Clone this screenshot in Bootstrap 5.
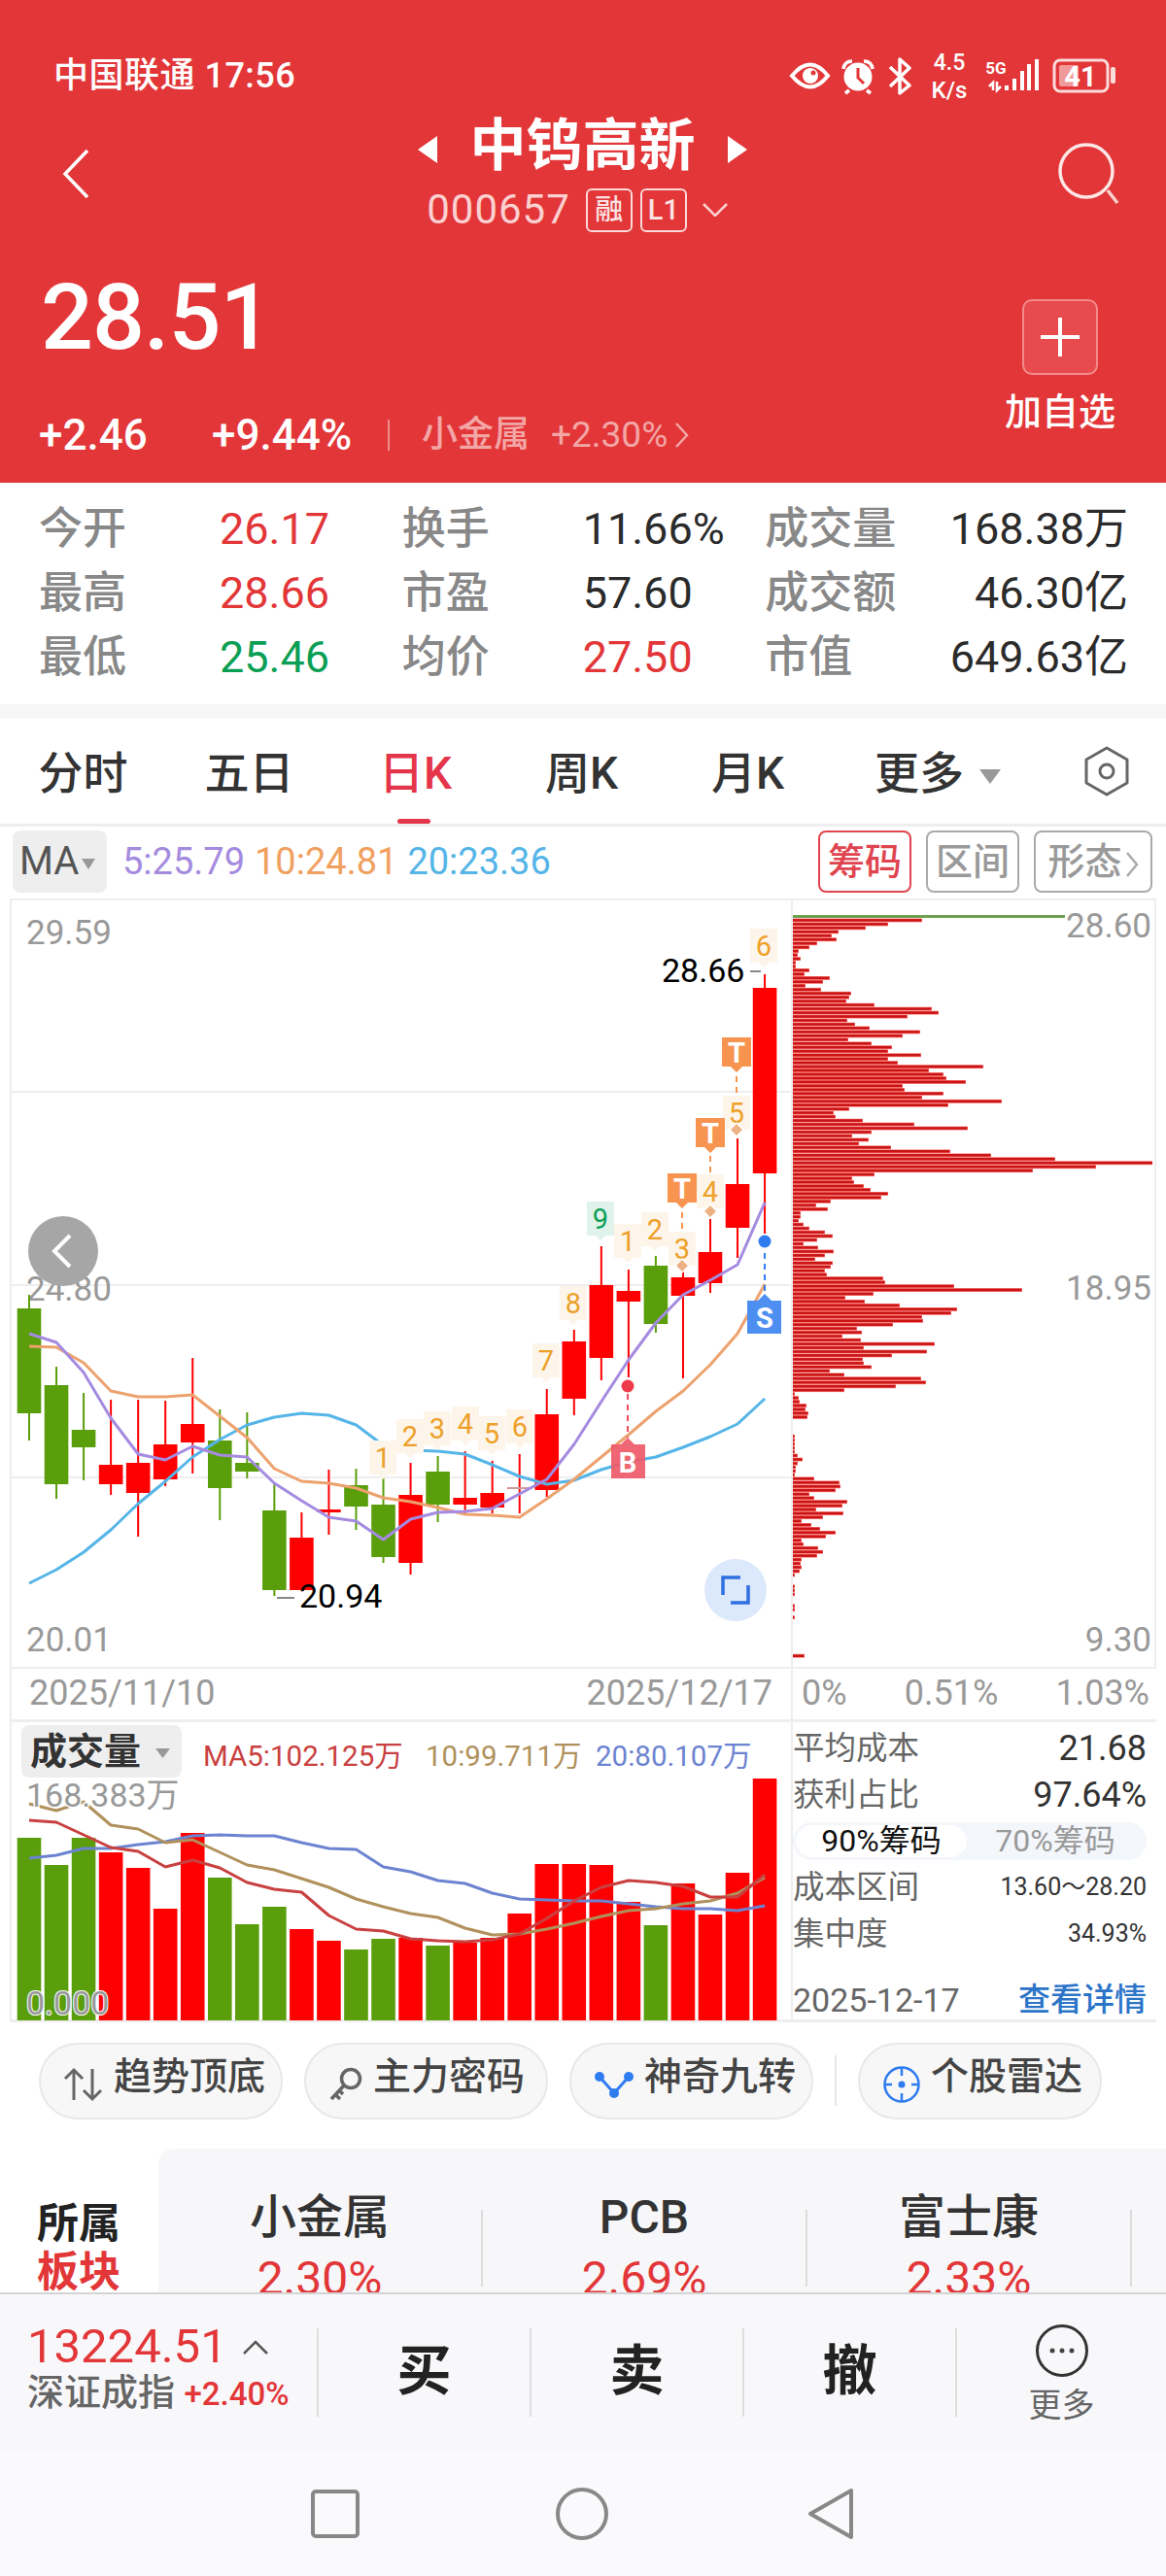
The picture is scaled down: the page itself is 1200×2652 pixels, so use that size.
<!DOCTYPE html>
<html lang="zh-CN">

<head>
    <meta charset="UTF-8">
    <meta name="viewport" content="width=device-width, initial-scale=1.0">
    <title>中钨高新</title>
    <link rel="stylesheet" href="https://cdn.jsdelivr.net/npm/bootstrap@5.3.2/dist/css/bootstrap.min.css">
    <style>
        body {
            background-color: #fff;
            color: #333;
            font-family: Roboto, "Noto Sans CJK SC", sans-serif;
        }

        .app-page { width: 1200px; height: 2652px; overflow: hidden; }

        /* top red block */
        .quote-head { height: 497px; background-color: #e23638; color: #fff; padding: 49px 46px 0 40px; }
        .status-line { height: 58px; padding-left: 15px; margin-right: 5px; }
        .carrier { font-size: 36px; font-weight: 500; line-height: 58px; letter-spacing: 0.5px; }
        .title-line { height: 134px; margin-top: 5px; padding-left: 23px; }
        .title-block { width: 360px; margin-left: 16px; }
        .stock-name { font-size: 58px; font-weight: 700; line-height: 66px; gap: 33px; padding-left: 2px; }
        .stock-sub { color: #fbd0d0; font-size: 42px; line-height: 50px; height: 50px; margin: 8px 0 0 -9px; }
        .stock-code { letter-spacing: 1px; }
        .tag-box { border: 2px solid #fbd9d9; border-radius: 6px; width: 48px; height: 45px; font-size: 29px; line-height: 41px; text-align: center; font-weight: 500; color: #fbe2e2; }
        .price-line { margin-top: 26px; }
        .last-price { font-size: 95px; line-height: 110px; font-weight: 500; letter-spacing: -1px; margin-left: 2px; }
        .move-line { margin-top: 41px; height: 50px; line-height: 50px; font-size: 44px; font-weight: 500; }
        .move-one { width: 178px; }
        .move-two { width: 181px; }
        .move-rule { width: 2px; height: 32px; background-color: #ef8d8d; margin-right: 33px; }
        .sector-link { color: #f3a6a6; font-size: 37px; width: 133px; font-weight: 500; }
        .sector-pct { color: #f3a6a6; font-size: 37px; font-weight: 400; }
        .add-wrap { margin-top: 36px; margin-right: 6px; }
        .add-box { width: 78px; height: 78px; background-color: #e84b4e; border: 2px solid #f28b8c; border-radius: 10px; padding: 0; }
        .add-label { font-size: 38px; font-weight: 500; line-height: 46px; margin-top: 15px; }

        /* numbers table */
        .stat-table { height: 228px; padding: 15px 39px 0 40px; }
        .stat-line { height: 66px; font-size: 45px; line-height: 66px; }
        .stat-name { color: #888; width: 186px; font-weight: 500; }
        .stat-val { color: #2b2b2b; font-size: 45px; }
        .up-red { color: #e23638; }
        .down-green { color: #0b9f55; }
        .gap-strip { height: 15px; background-color: #f7f7f7; }

        /* period tabs */
        .period-tabs { height: 111px; border-bottom: 3px solid #eee; position: relative; }
        .period-tabs .nav-link { width: 171px; height: 108px; padding: 0; text-align: center; color: #333; font-size: 46px; line-height: 112px; font-weight: 500; }
        .period-tabs .nav-link.active { color: #e5354a; position: relative; }
        .period-tabs .nav-link.active::after { content: ""; position: absolute; left: 67px; bottom: 0; width: 34px; height: 5px; border-radius: 3px; background-color: #e5354a; }
        .period-more { text-align: left !important; padding-left: 45px !important; width: 200px !important; }
        .period-hex { margin-right: 38px; margin-top: 28px; }

        /* MA toolbar */
        .ma-bar { height: 74px; padding: 4px 14px 6px 13px; }
        .ma-chip { width: 97px; height: 64px; background-color: #eee; border-radius: 8px; font-size: 40px; color: #555; line-height: 64px; padding-left: 7px; }
        .tri-down { display: inline-block; width: 0; height: 0; border-left: 7px solid transparent; border-right: 7px solid transparent; border-top: 11px solid #999; vertical-align: middle; margin-left: 3px; }
        .tri-big { border-left-width: 11px; border-right-width: 11px; border-top-width: 15px; margin-left: 16px; }
        .ma-vals { font-size: 38px; margin-left: 16px; gap: 10px; }
        .ma-five { color: #a58be0; }
        .ma-ten { color: #f0a060; }
        .ma-twenty { color: #55b5e8; }
        .tool-btn { height: 64px; width: 96px; padding: 0; border: 2px solid #aaa; border-radius: 8px; font-size: 38px; line-height: 58px; color: #999; font-weight: 500; background-color: #fff; margin-left: 15px; }
        .tool-btn.on { border-color: #e0444f; color: #e0444f; }
        .tool-wide { width: 122px; }

        /* chart panels */
        .chart-main { margin: 0 10px; width: 1180px; height: 793px; border: 2px solid #eee; }
        .chart-main svg, .vol-main svg { display: block; }
        .chart-left { width: 804px; border-right: 2px solid #eee; }
        .date-line { margin: 0 10px; width: 1180px; height: 52px; font-size: 36px; color: #999; border-left: 2px solid #eee; line-height: 50px; }
        .date-left { width: 804px; padding: 0 19px 0 18px; border-right: 2px solid #eee; }
        .date-right { width: 372px; padding: 0 5px 0 9px; }
        .vol-main { margin: 0 10px; width: 1180px; height: 312px; border-top: 3px solid #eee; border-bottom: 3px solid #eee; border-left: 2px solid #eee; }
        .vol-left { width: 804px; border-right: 2px solid #eee; }
        .cost-side { width: 364px; font-size: 32.5px; color: #666; padding-top: 3px; }
        .cost-line { height: 48px; line-height: 48px; }
        .cost-big { font-size: 36px; color: #333; }
        .cost-small { font-size: 25px; color: #333; }
        .cost-switch { height: 39px; background-color: #f3f6fa; border-radius: 20px; padding: 3px; margin: 4px 0 4px; font-size: 32px; line-height: 33px; color: #999; }
        .cost-on { width: 176px; background-color: #fff; border-radius: 17px; color: #111; text-align: center; }
        .cost-off { flex: 1; text-align: center; }
        .cost-foot { font-size: 34px; margin-top: 22px; line-height: 44px; }
        .cost-more { font-size: 33px; color: #2b74c8; font-weight: 500; }

        /* feature pills */
        .pill-row { height: 130px; padding: 21px 0 0 40px; gap: 22px; }
        .pill-btn { width: 251px; height: 79px; padding: 0 0 9px 23px; background-color: #f7f7f7; border: 2px solid #e8e8e8; font-size: 39px; font-weight: 500; color: #444; gap: 10px; }
        .pill-rule { width: 2px; height: 52px; background-color: #e6e6e6; margin-top: 13px; }

        /* sector strip */
        .sector-row { height: 148px; overflow: hidden; }
        .sector-head { width: 163px; padding: 52px 0 0 38px; font-size: 43px; line-height: 50px; font-weight: 700; color: #222; }
        .sector-body { flex: 1; background-color: #f7f7f9; border-top-left-radius: 16px; }
        .sector-item { width: 334px; height: 79px; margin-top: 63px; text-align: center; font-size: 48px; line-height: 52px; font-weight: 500; color: #333; border-right: 2px solid #ddd; }
        .sector-item div { margin-top: -18px; }
        .sector-item .sector-pct-big { color: #e23638; font-size: 48px; font-weight: 400; line-height: 62px; margin-top: 6px; }

        /* trade bar */
        .trade-bar { height: 165px; background-color: #f8f8fb; border-top: 2px solid #d4d4d4; padding-top: 35px; }
        .index-cell { width: 328px; height: 91px; padding-left: 28px; border-right: 2px solid #ddd; }
        .index-val { color: #e23638; font-size: 49px; line-height: 46px; margin-top: -4px; }
        .index-name { color: #666; font-size: 38px; line-height: 44px; margin-top: 2px; font-weight: 500; }
        .index-pct { color: #e23638; font-size: 33px; }
        .trade-cell { width: 219px; height: 91px; border-right: 2px solid #ddd; font-size: 56px; font-weight: 700; color: #222; line-height: 88px; text-align: center; }
        .more-cell { width: 215px; text-align: center; color: #666; font-size: 34px; line-height: 40px; margin-top: -5px; }

        .nav-strip { height: 127px; background-color: #fafafc; }
    </style>
</head>

<body>
    <div class="app-page">

        <header class="quote-head">
            <div class="status-line d-flex justify-content-between align-items-center">
                <span class="carrier">中国联通 17:56</span>
                <svg width="340" height="66" viewBox="810 44 340 66">
                    <path d="M816 77 Q835 54 853 77 Q835 100 816 77Z" fill="none" stroke="#fff" stroke-width="4"/>
                    <circle cx="835" cy="77" r="8" fill="#fff"/>
                    <circle cx="838" cy="74" r="2.5" fill="#e23638"/>
                    <circle cx="884" cy="78" r="14.5" fill="#fff"/>
                    <path d="M884 69 V79 L890 85" fill="none" stroke="#e23638" stroke-width="3"/>
                    <path d="M869 70 Q870 62 878 62 M899 70 Q898 62 890 62 M875 92 L871 95 M893 92 L897 95" fill="none" stroke="#fff" stroke-width="3.5"/>
                    <path d="M917 68 L937 87 L927 95 V60 L937 69 L917 88" fill="none" stroke="#fff" stroke-width="3.5" stroke-linejoin="round"/>
                    <text x="978" y="71" text-anchor="middle" fill="#fff" font-size="23" font-weight="500">4.5</text>
                    <text x="978" y="100" text-anchor="middle" fill="#fff" font-size="24" font-weight="500">K/s</text>
                    <text x="1026" y="75" text-anchor="middle" fill="#fff" font-size="17" font-weight="700">5G</text>
                    <path d="M1019 88 L1023 84 V92 M1027 83 V92 L1031 88" fill="none" stroke="#fff" stroke-width="2.5"/>
                    <g fill="#fff">
                        <rect x="1035" y="87" width="4" height="5"/>
                        <rect x="1043" y="80" width="4" height="12"/>
                        <rect x="1051" y="72" width="4" height="20"/>
                        <rect x="1058" y="65" width="4" height="27"/>
                        <rect x="1066" y="60" width="4" height="32"/>
                    </g>
                    <rect x="1086" y="61" width="55" height="32" rx="6" fill="none" stroke="#fbdcdc" stroke-width="3"/>
                    <rect x="1091" y="66" width="20" height="22" rx="2" fill="#f09a9a"/>
                    <text x="1113" y="88" text-anchor="middle" fill="#fff" font-size="29" font-weight="700">41</text>
                    <rect x="1144" y="68" width="5" height="17" rx="2" fill="#fbdcdc"/>
                </svg>
            </div>

            <div class="title-line d-flex justify-content-between align-items-center">
                <svg width="30" height="52" viewBox="0 0 30 52"><path d="M27 2 L4 26 L27 50" fill="none" stroke="#fff" stroke-width="3.5"/></svg>
                <div class="title-block">
                    <div class="d-flex justify-content-center align-items-center stock-name">
                        <svg width="20" height="28" viewBox="0 0 20 28" class="mt-2"><path d="M20 0 V28 L0 14Z" fill="#fff"/></svg>
                        <span>中钨高新</span>
                        <svg width="20" height="28" viewBox="0 0 20 28" class="mt-2"><path d="M0 0 V28 L20 14Z" fill="#fff"/></svg>
                    </div>
                    <div class="d-flex justify-content-center align-items-center stock-sub">
                        <span class="stock-code">000657</span>
                        <span class="tag-box ms-3">融</span>
                        <span class="tag-box ms-2">L1</span>
                        <svg width="26" height="14" viewBox="0 0 26 14" class="ms-3"><path d="M1 1 L13 13 L25 1" fill="none" stroke="#fbd0d0" stroke-width="2.5"/></svg>
                    </div>
                </div>
                <svg width="66" height="66" viewBox="0 0 66 66">
                    <circle cx="30" cy="30" r="27" fill="none" stroke="#fde6e6" stroke-width="3.5"/>
                    <path d="M52 50 L62 63" stroke="#fbd0d0" stroke-width="3.5"/>
                </svg>
            </div>

            <div class="price-line d-flex justify-content-between">
                <div>
                    <div class="last-price">28.51</div>
                    <div class="move-line d-flex align-items-center">
                        <span class="move-one">+2.46</span>
                        <span class="move-two">+9.44%</span>
                        <span class="move-rule"></span>
                        <span class="sector-link">小金属</span>
                        <span class="sector-pct">+2.30%</span>
                        <svg width="14" height="26" viewBox="0 0 14 26" class="ms-2"><path d="M1 1 L12 13 L1 25" fill="none" stroke="#f3a6a6" stroke-width="2.5"/></svg>
                    </div>
                </div>
                <div class="add-wrap d-flex flex-column align-items-center">
                    <button type="button" class="btn add-box d-flex align-items-center justify-content-center">
                        <svg width="40" height="40" viewBox="0 0 40 40"><path d="M20 0 V40 M0 20 H40" stroke="#fff" stroke-width="4"/></svg>
                    </button>
                    <div class="add-label">加自选</div>
                </div>
            </div>
        </header>

        <section class="stat-table">
            <div class="row g-0 stat-line">
                <div class="col-4 d-flex"><span class="stat-name">今开</span><span class="stat-val up-red">26.17</span></div>
                <div class="col-4 d-flex"><span class="stat-name">换手</span><span class="stat-val">11.66%</span></div>
                <div class="col-4 d-flex justify-content-between"><span class="stat-name">成交量</span><span class="stat-val">168.38万</span></div>
            </div>
            <div class="row g-0 stat-line">
                <div class="col-4 d-flex"><span class="stat-name">最高</span><span class="stat-val up-red">28.66</span></div>
                <div class="col-4 d-flex"><span class="stat-name">市盈</span><span class="stat-val">57.60</span></div>
                <div class="col-4 d-flex justify-content-between"><span class="stat-name">成交额</span><span class="stat-val">46.30亿</span></div>
            </div>
            <div class="row g-0 stat-line">
                <div class="col-4 d-flex"><span class="stat-name">最低</span><span class="stat-val down-green">25.46</span></div>
                <div class="col-4 d-flex"><span class="stat-name">均价</span><span class="stat-val up-red">27.50</span></div>
                <div class="col-4 d-flex justify-content-between"><span class="stat-name">市值</span><span class="stat-val">649.63亿</span></div>
            </div>
        </section>
        <div class="gap-strip"></div>

        <nav class="nav period-tabs flex-nowrap align-items-start">
            <a class="nav-link" href="#">分时</a>
            <a class="nav-link" href="#">五日</a>
            <a class="nav-link active" href="#">日K</a>
            <a class="nav-link" href="#">周K</a>
            <a class="nav-link" href="#">月K</a>
            <a class="nav-link period-more" href="#">更多<span class="tri-down tri-big"></span></a>
            <svg width="46" height="52" viewBox="0 0 46 52" class="ms-auto period-hex">
                <path d="M23 2 L44 14 V38 L23 50 L2 38 V14Z" fill="none" stroke="#666" stroke-width="3" stroke-linejoin="round"/>
                <circle cx="23" cy="26" r="7" fill="none" stroke="#666" stroke-width="3"/>
            </svg>
        </nav>

        <div class="ma-bar d-flex align-items-center">
            <div class="ma-chip">MA<span class="tri-down"></span></div>
            <div class="ma-vals d-flex">
                <span class="ma-five">5:25.79</span>
                <span class="ma-ten">10:24.81</span>
                <span class="ma-twenty">20:23.36</span>
            </div>
            <button type="button" class="btn tool-btn on ms-auto">筹码</button>
            <button type="button" class="btn tool-btn">区间</button>
            <button type="button" class="btn tool-btn tool-wide">形态<svg width="13" height="26" viewBox="0 0 13 26" class="ms-1"><path d="M1 1 L11 13 L1 25" fill="none" stroke="#aaa" stroke-width="2.5"/></svg></button>
        </div>

        <div class="chart-main d-flex">
            <div class="chart-left"><svg id="kline" width="804" height="789" viewBox="12 927 804 789"></svg></div>
            <div><svg id="chips" width="370" height="789" viewBox="816 927 370 789"></svg></div>
        </div>
        <div class="date-line d-flex">
            <div class="date-left d-flex justify-content-between"><span>2025/11/10</span><span>2025/12/17</span></div>
            <div class="date-right d-flex justify-content-between"><span>0%</span><span>0.51%</span><span>1.03%</span></div>
        </div>

        <div class="vol-main d-flex">
            <div class="vol-left"><svg id="volume" width="804" height="312" viewBox="12 1773 804 312"></svg></div>
            <div class="cost-side">
                <div class="d-flex justify-content-between cost-line"><span>平均成本</span><span class="cost-big">21.68</span></div>
                <div class="d-flex justify-content-between cost-line"><span>获利占比</span><span class="cost-big">97.64%</span></div>
                <div class="d-flex cost-switch"><span class="cost-on">90%筹码</span><span class="cost-off">70%筹码</span></div>
                <div class="d-flex justify-content-between cost-line"><span>成本区间</span><span class="cost-small">13.60～28.20</span></div>
                <div class="d-flex justify-content-between cost-line"><span>集中度</span><span class="cost-small">34.93%</span></div>
                <div class="d-flex justify-content-between cost-foot"><span>2025-12-17</span><span class="cost-more">查看详情</span></div>
            </div>
        </div>

        <div class="pill-row d-flex">
            <button type="button" class="btn rounded-pill pill-btn d-flex align-items-center">
                <svg width="42" height="36" viewBox="0 0 42 36" class="mt-3"><path d="M11 34 V3 M2 12 L11 3 L20 12 M30 2 V33 M21 24 L30 33 L39 24" fill="none" stroke="#666" stroke-width="3"/></svg>趋势顶底
            </button>
            <button type="button" class="btn rounded-pill pill-btn d-flex align-items-center">
                <svg width="36" height="36" viewBox="0 0 36 36" class="mt-3"><circle cx="23" cy="12" r="9.5" fill="none" stroke="#666" stroke-width="3.5"/><path d="M16 19 L3 33 M7 28 L12 33 M11 24 L15 28" fill="none" stroke="#666" stroke-width="3.5"/></svg>主力密码
            </button>
            <button type="button" class="btn rounded-pill pill-btn d-flex align-items-center">
                <svg width="42" height="28" viewBox="0 0 42 28" class="mt-3"><path d="M6 6 L21 23 L36 6" fill="none" stroke="#2f7bf0" stroke-width="3"/><circle cx="6" cy="6" r="5" fill="#2f7bf0"/><circle cx="36" cy="6" r="5" fill="#2f7bf0"/><circle cx="21" cy="23" r="5" fill="#2f7bf0"/></svg>神奇九转
            </button>
            <div class="pill-rule"></div>
            <button type="button" class="btn rounded-pill pill-btn d-flex align-items-center">
                <svg width="40" height="40" viewBox="0 0 40 40" class="mt-3"><circle cx="20" cy="20" r="17.5" fill="none" stroke="#2f7bf0" stroke-width="2.5"/><path d="M20 2 V11 M20 29 V38 M2 20 H10 M30 20 H38" stroke="#2f7bf0" stroke-width="2.5"/><circle cx="20" cy="20" r="3.5" fill="#2f7bf0"/></svg>个股雷达
            </button>
        </div>

        <div class="sector-row d-flex">
            <div class="sector-head">所属<br><span class="up-red">板块</span></div>
            <div class="sector-body d-flex">
                <div class="sector-item"><div>小金属</div><div class="sector-pct-big">2.30%</div></div>
                <div class="sector-item"><div>PCB</div><div class="sector-pct-big">2.69%</div></div>
                <div class="sector-item"><div>富士康</div><div class="sector-pct-big">2.33%</div></div>
            </div>
        </div>

        <div class="trade-bar d-flex">
            <div class="index-cell">
                <div class="index-val d-flex align-items-center">13224.51<svg width="26" height="15" viewBox="0 0 26 15" class="ms-3"><path d="M1 14 L13 2 L25 14" fill="none" stroke="#555" stroke-width="2.5"/></svg></div>
                <div class="index-name">深证成指 <span class="index-pct">+2.40%</span></div>
            </div>
            <div class="trade-cell">买</div>
            <div class="trade-cell">卖</div>
            <div class="trade-cell">撤</div>
            <div class="more-cell">
                <svg width="56" height="56" viewBox="0 0 56 56" class="d-block mx-auto"><circle cx="28" cy="28" r="25.5" fill="none" stroke="#333" stroke-width="3"/><circle cx="18" cy="28" r="2.5" fill="#444"/><circle cx="28" cy="28" r="2.5" fill="#444"/><circle cx="38" cy="28" r="2.5" fill="#444"/></svg>
                <div class="mt-2">更多</div>
            </div>
        </div>

        <div class="nav-strip d-flex">
            <svg width="1200" height="127" viewBox="0 2525 1200 127">
                <rect x="322" y="2565" width="46" height="46" rx="3" fill="none" stroke="#888" stroke-width="4"/>
                <circle cx="599" cy="2588" r="25" fill="none" stroke="#888" stroke-width="4"/>
                <path d="M876 2564 V2612 L834 2588Z" fill="none" stroke="#888" stroke-width="4" stroke-linejoin="round"/>
            </svg>
        </div>
    </div>

    <script src="https://cdn.jsdelivr.net/npm/bootstrap@5.3.2/dist/js/bootstrap.bundle.min.js"></script>
    <script>
        const RED = '#ff0000';
        const GREEN = '#5a9e0b';
        const NUM_FONT = 'Roboto, sans-serif';

        function slotX(i) {
            return 30 + i * 28.04;
        }

        // [wickTop, wickBottom, bodyTop, bodyBottom, isRed]
        const candles = [
            [1333, 1483, 1347, 1455, 0], [1407, 1543, 1426, 1528, 0], [1434, 1524, 1472, 1490, 0],
            [1441, 1539, 1508, 1528, 1], [1441, 1582, 1506, 1537, 1], [1442, 1530, 1487, 1523, 1],
            [1398, 1517, 1466, 1485, 1], [1451, 1565, 1483, 1532, 0], [1454, 1522, 1506, 1515, 0],
            [1528, 1643, 1555, 1637, 0], [1557, 1637, 1583, 1637, 1], [1513, 1580, 1554, 1557, 1],
            [1512, 1575, 1529, 1551, 0], [1517, 1609, 1549, 1603, 0], [1506, 1621, 1539, 1609, 1],
            [1499, 1567, 1515, 1549, 0], [1494, 1560, 1542, 1549, 1], [1504, 1558, 1537, 1552, 1],
            [1497, 1558, 1531, 1533, 1], [1430, 1541, 1456, 1534, 1], [1369, 1457, 1381, 1440, 1],
            [1283, 1421, 1323, 1398, 1], [1307, 1418, 1329, 1340, 1], [1293, 1372, 1303, 1363, 0],
            [1300, 1419, 1315, 1334, 1], [1255, 1331, 1289, 1321, 1], [1172, 1295, 1219, 1264, 1],
            [1003, 1270, 1017, 1208, 1]
        ];
        const ma5 = [1373, 1382, 1413, 1460, 1497, 1503, 1489, 1498, 1500, 1527, 1545, 1562, 1566, 1585, 1564, 1557, 1556, 1553, 1538, 1523, 1487, 1443, 1400, 1362, 1333, 1318, 1302, 1238];
        const ma10 = [1386, 1387, 1403, 1432, 1438, 1438, 1436, 1458, 1480, 1512, 1525, 1527, 1532, 1542, 1546, 1552, 1559, 1560, 1562, 1543, 1523, 1500, 1477, 1453, 1432, 1405, 1373, 1322];
        const ma20 = [1630, 1616, 1598, 1575, 1548, 1525, 1500, 1482, 1467, 1459, 1455, 1457, 1467, 1488, 1493, 1494, 1497, 1508, 1520, 1528, 1524, 1513, 1505, 1500, 1490, 1479, 1466, 1440];

        // [top, isRed]
        const volBars = [
            [1892, 0], [1920, 0], [1892, 0], [1907, 1], [1923, 1], [1965, 1], [1887, 1], [1933, 0], [1981, 0], [1963, 0],
            [1986, 1], [1998, 1], [2007, 0], [1996, 0], [1995, 1], [2003, 0], [2000, 1], [1995, 1], [1970, 1], [1919, 1],
            [1919, 1], [1920, 1], [1958, 1], [1982, 0], [1939, 1], [1971, 1], [1928, 1], [1831, 1]
        ];
        const volMa5 = [1874, 1876, 1889, 1902, 1906, 1922, 1915, 1923, 1938, 1945, 1948, 1972, 1986, 1988, 1996, 1998, 1999, 1997, 1991, 1975, 1957, 1943, 1936, 1938, 1942, 1953, 1953, 1930];
        const volMa10 = [1857, 1864, 1855, 1879, 1883, 1897, 1894, 1907, 1920, 1925, 1934, 1943, 1955, 1963, 1970, 1974, 1985, 1992, 1991, 1986, 1980, 1973, 1967, 1965, 1960, 1957, 1949, 1933];
        const volMa20 = [1913, 1910, 1903, 1903, 1899, 1896, 1890, 1889, 1890, 1890, 1897, 1903, 1904, 1922, 1927, 1936, 1939, 1949, 1955, 1956, 1957, 1957, 1960, 1963, 1965, 1965, 1967, 1962];

        // chip bar lengths, one per 4px row going down from y=947
        const chipWidths = [
            133, 98, 75, 47, 40, 45, 25, 17, 6, 5, 8, 3, 3, 17, 12, 38, 31, 13, 29, 60, 58, 55, 84, 143, 150, 118, 56, 64, 79, 131,
            113, 57, 81, 102, 98, 132, 98, 108, 196, 140, 155, 158, 178, 113, 115, 155, 133, 215, 160, 58, 42, 44, 72, 125, 180, 81,
            61, 78, 68, 101, 162, 204, 270, 371, 312, 247, 84, 61, 63, 73, 80, 98, 91, 39, 24, 36, 8, 8, 6, 11, 17, 33, 41, 25, 11,
            26, 42, 33, 23, 41, 39, 33, 35, 93, 95, 166, 236, 83, 54, 74, 110, 169, 163, 133, 134, 103, 66, 71, 51, 70, 146, 73,
            138, 102, 72, 73, 81, 38, 53, 132, 137, 106, 53, 2, 6, 7, 14, 13, 16, 15, 0, 0, 0, 0, 2, 2, 2, 2, 2, 5, 10, 5, 3, 3, 2,
            22, 48, 49, 44, 17, 22, 56, 51, 24, 52, 31, 9, 19, 28, 44, 34, 9, 11, 26, 31, 25, 9, 8, 9, 7, 2, 0, 0, 2, 2, 2, 0, 0, 2,
            2, 0, 2, 0, 0, 0, 0, 0, 0, 0, 0, 0, 12
        ];

        function linePath(values, color, width) {
            const pts = values.map((y, i) => slotX(i).toFixed(1) + ',' + y).join(' ');
            return `<polyline points="${pts}" fill="none" stroke="${color}" stroke-width="${width}" stroke-linejoin="round"/>`;
        }

        function numTag(x, cy, text, fg, bg) {
            return `<path d="M${x - 14} ${cy - 19} h28 v35 h-9 l-5 5 l-5 -5 h-9 Z" fill="${bg}"/>` +
                `<text x="${x}" y="${cy + 9}" text-anchor="middle" font-size="29" fill="${fg}" font-family="${NUM_FONT}">${text}</text>`;
        }

        function tTag(x, top) {
            return `<path d="M${x - 15} ${top} h30 v30 h-9 l-6 6 l-6 -6 h-9 Z" fill="#f79550"/>` +
                `<text x="${x}" y="${top + 26}" text-anchor="middle" font-size="29" font-weight="700" fill="#fff" font-family="${NUM_FONT}">T</text>`;
        }

        function diamond(x, y) {
            return `<path d="M${x} ${y - 7} l7 7 l-7 7 l-7 -7 Z" fill="#eeb184" stroke="#fff" stroke-width="1.5"/>`;
        }

        function grayText(x, y, text, anchor) {
            return `<text x="${x}" y="${y}" text-anchor="${anchor || 'start'}" font-size="35" fill="#999" font-family="${NUM_FONT}">${text}</text>`;
        }

        function drawKline() {
            let out = '';
            [1124, 1323, 1521].forEach(y => {
                out += `<rect x="12" y="${y - 1}" width="804" height="2" fill="#eee"/>`;
            });
            out += grayText(27, 972, '29.59') + grayText(27, 1339, '24.80') + grayText(27, 1700, '20.01');

            candles.forEach((c, i) => {
                const x = slotX(i);
                const color = c[4] ? RED : GREEN;
                out += `<rect x="${x - 1}" y="${c[0]}" width="2" height="${c[1] - c[0]}" fill="${color}"/>`;
                out += `<rect x="${x - 12.3}" y="${c[2]}" width="24.6" height="${c[3] - c[2]}" fill="${color}"/>`;
            });
            out += `<rect x="${slotX(18) - 12}" y="1531" width="24" height="2" fill="#cf9a9a"/>`;

            out += linePath(ma20, '#55b5e8', 3);
            out += linePath(ma10, '#eda26e', 3);
            out += linePath(ma5, '#a58be0', 3);

            const dash = 'stroke-dasharray="6 5" stroke-width="2"';
            out += `<line x1="787" y1="1290" x2="787" y2="1332" stroke="#2f7bf0" ${dash}/>`;
            out += `<line x1="646" y1="1435" x2="646" y2="1480" stroke="#ee4a58" ${dash}/>`;
            out += `<line x1="702" y1="1248" x2="702" y2="1266" stroke="#f79550" ${dash}/>`;
            out += `<line x1="731" y1="1190" x2="731" y2="1208" stroke="#f79550" ${dash}/>`;
            out += `<line x1="758" y1="1108" x2="758" y2="1126" stroke="#f79550" ${dash}/>`;
            out += `<circle cx="787" cy="1278" r="6.5" fill="#2f7bf0"/>`;
            out += `<circle cx="646" cy="1427" r="6.5" fill="#ee3b4a"/>`;

            const orange = '#eda028';
            const cream = '#fdf5ea';
            [[1, 394, 1502], [2, 422, 1480], [3, 450, 1472], [4, 479, 1467], [5, 506, 1477], [6, 535, 1470], [7, 562, 1402], [8, 590, 1343]]
                .forEach(t => { out += numTag(t[1], t[2], t[0], orange, cream); });
            out += numTag(618, 1256, 9, '#0b9f55', '#dff3ea');
            [[1, 646, 1279], [2, 674, 1267], [3, 702, 1287], [4, 731, 1228], [5, 758, 1147], [6, 786, 975]]
                .forEach(t => { out += numTag(t[1], t[2], t[0], orange, cream); });
            out += diamond(702, 1303) + diamond(731, 1247) + diamond(758, 1163);
            out += tTag(702, 1208) + tTag(731, 1151) + tTag(758, 1068);

            // S and B markers
            out += `<path d="M769 1339 h11 l7 -7 l7 7 h10 V1373 H769Z" fill="#4d8ff0"/>`;
            out += `<text x="787" y="1367" text-anchor="middle" font-size="29" font-weight="700" fill="#fff" font-family="${NUM_FONT}">S</text>`;
            out += `<path d="M629 1487 h10 l7 -7 l7 7 h11 V1522 H629Z" fill="#ee5a68" fill-opacity="0.92"/>`;
            out += `<text x="646" y="1516" text-anchor="middle" font-size="29" font-weight="700" fill="#fff" font-family="${NUM_FONT}">B</text>`;

            out += `<text x="681" y="1011" font-size="34" fill="#000" font-family="${NUM_FONT}">28.66</text>`;
            out += `<rect x="772" y="999" width="11" height="2" fill="#888"/>`;
            out += `<text x="308" y="1655" font-size="34" fill="#000" font-family="${NUM_FONT}">20.94</text>`;
            out += `<rect x="285" y="1644" width="18" height="2" fill="#888"/>`;

            out += `<circle cx="65" cy="1288" r="36" fill="#a6a6a6"/>`;
            out += `<path d="M72 1272 L56 1288 L72 1304" fill="none" stroke="#fff" stroke-width="4"/>`;
            out += `<circle cx="757" cy="1637" r="32" fill="#dce8fb"/>`;
            out += `<path d="M744 1642 V1624 H762 M770 1632 V1650 H752" fill="none" stroke="#2f6fe0" stroke-width="3.5"/>`;
            document.getElementById('kline').innerHTML = out;
        }

        function drawChips() {
            let out = `<rect x="816" y="942" width="280" height="3" fill="#6ca050"/>`;
            [1124, 1323, 1521].forEach(y => {
                out += `<rect x="816" y="${y - 1}" width="3" height="2" fill="#eee"/>`;
            });
            chipWidths.forEach((w, i) => {
                if (!w) return;
                const y = 945.5 + i * 3.965;
                out += `<rect x="816" y="${y.toFixed(1)}" width="${w}" height="3.9" fill="#ff7b7b"/>`;
                out += `<rect x="816" y="${(y + 0.6).toFixed(1)}" width="${w - 0.5}" height="2.6" fill="#c91414"/>`;
            });
            out += grayText(1185, 965, '28.60', 'end') + grayText(1185, 1338, '18.95', 'end') + grayText(1185, 1700, '9.30', 'end');
            document.getElementById('chips').innerHTML = out;
        }

        function drawVolume() {
            let out = '';
            volBars.forEach((b, i) => {
                out += `<rect x="${slotX(i) - 12.3}" y="${b[0]}" width="24.6" height="${2080 - b[0]}" fill="${b[1] ? RED : GREEN}"/>`;
            });
            out += linePath(volMa20, '#6c83d0', 3);
            out += linePath(volMa10, '#b0915c', 3);
            out += linePath(volMa5, '#c94040', 3);

            out += `<rect x="22" y="1776" width="165" height="54" rx="8" fill="#eee"/>`;
            out += `<text x="31" y="1816" font-size="38" font-weight="700" fill="#333" font-family="'Noto Sans CJK SC', sans-serif">成交量</text>`;
            out += `<path d="M160 1800 h15 l-7.5 10Z" fill="#999"/>`;
            const legendFont = `font-size="29.5" font-family="Roboto, 'Noto Sans CJK SC', sans-serif"`;
            out += `<text x="209" y="1818" fill="#c94040" ${legendFont}>MA5:102.125万</text>`;
            out += `<text x="438" y="1818" fill="#b0915c" ${legendFont}>10:99.711万</text>`;
            out += `<text x="613" y="1818" fill="#6c83d0" ${legendFont}>20:80.107万</text>`;
            out += `<text x="27" y="1860" font-size="34" fill="#999" stroke="#fff" stroke-width="3" paint-order="stroke" font-family="Roboto, 'Noto Sans CJK SC', sans-serif">168.383万</text>`;
            out += `<text x="27" y="2074" font-size="34" fill="#999" stroke="#fff" stroke-width="2" paint-order="stroke" font-family="${NUM_FONT}">0.000</text>`;
            document.getElementById('volume').innerHTML = out;
        }

        drawKline();
        drawChips();
        drawVolume();
    </script>

</body>

</html>
